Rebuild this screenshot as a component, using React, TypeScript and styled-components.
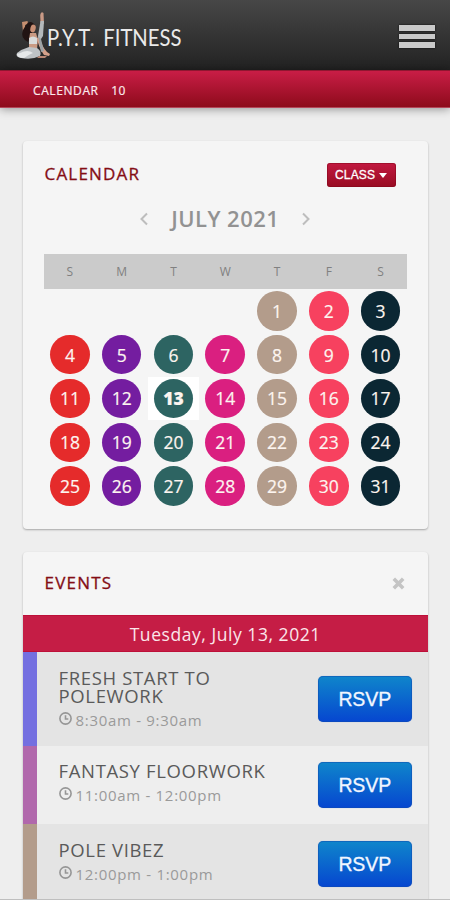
import React from 'react';
import styled, { createGlobalStyle, css } from 'styled-components';

const GlobalStyle = createGlobalStyle`
  *, *::before, *::after { box-sizing: border-box; }
  html, body { margin: 0; padding: 0; background: #eee; overflow: hidden; }
  body { font-family: "Open Sans", "Noto Sans", sans-serif; }
  button { font: inherit; border: 0; padding: 0; cursor: pointer; }
`;

const Screen = styled.div`
  display: flex;
  flex-direction: column;
  height: 900px;
  overflow: hidden;
  background: #eee;
  border-bottom: 1px solid #bfbfbf;
`;

const Header = styled.header`
  display: flex;
  flex: none;
  justify-content: space-between;
  height: 70px;
  padding: 10px 15px 0 15px;
  background: linear-gradient(#474747, #222);
`;

const Brand = styled.div`
  display: flex;
  align-items: flex-start;
`;

const Wordmark = styled.span`
  margin: 11.5px 0 0 -4px;
  font: 400 24px/30px Lato, sans-serif;
  white-space: nowrap;
  color: #eaeaea;
  transform: scaleX(0.845);
  transform-origin: left;
`;

const Initials = styled.span`
  margin-right: 3px;
  letter-spacing: 1.1px;
`;

const MenuButton = styled.button`
  display: flex;
  flex-direction: column;
  gap: 3px;
  width: 36px;
  height: 26px;
  margin-top: 15px;
  background: none;
`;

const MenuBar = styled.span`
  height: 5.6px;
  width: 36px;
  background: #c9c9c9;
  box-shadow: 0 0 2px #000;
`;

const SubNav = styled.nav`
  display: flex;
  flex: none;
  align-items: center;
  gap: 12.5px;
  height: 38px;
  padding: 2px 33px 0;
  border-top: 1px solid #8f1630;
  border-bottom: 1px solid #b5475a;
  background: linear-gradient(#c91d46, #8d0b1b);
  box-shadow: 0 1px 9px rgba(0, 0, 0, 0.4);
  font-size: 12px;
  letter-spacing: 0.6px;
  color: #fbe9ec;
  -webkit-text-stroke: 0.2px #fbe9ec;
`;

const Content = styled.main`
  display: flex;
  flex-direction: column;
  flex: none;
  gap: 22.5px;
  padding: 33px 22px 0 22.5px;
`;

const Card = styled.section`
  border-radius: 4px;
  background: #f5f5f5;
  box-shadow: 0 1px 2px rgba(0, 0, 0, 0.3);
  overflow: hidden;
`;

const CalendarCard = styled(Card)`
  height: 388px;
`;

const EventsCard = styled(Card)`
  height: 400px;
`;

const CardHeader = styled.div`
  display: flex;
  align-items: center;
  justify-content: space-between;
  height: 63.5px;
  padding: 1px 23px 2px 22px;
`;

const CalendarHeader = styled(CardHeader)`
  height: 65px;
  padding: 0 32.5px 0 22px;
`;

const Title = styled.h2`
  margin: 0;
  font-size: 17px;
  font-weight: 400;
  letter-spacing: 1.2px;
  color: #840d15;
  -webkit-text-stroke: 0.3px #840d15;
`;

const ClassButton = styled.button`
  display: flex;
  align-items: center;
  gap: 4px;
  width: 68.5px;
  height: 24.5px;
  margin-top: 3px;
  padding: 0 8px;
  border-radius: 3px;
  background: linear-gradient(#c21840, #980c22);
  box-shadow: inset 0 0 0 1px rgba(130, 5, 25, 0.5);
  font-family: "Liberation Sans", Arial, sans-serif;
  font-size: 12px;
  letter-spacing: 0.15px;
  color: #fff;
  -webkit-text-stroke: 0.3px #fff;
`;

const Caret = styled.span`
  flex: none;
  border: 4px solid transparent;
  border-top: 5px solid #fff;
  border-bottom: 0;
`;

const MonthNav = styled.div`
  display: flex;
  align-items: center;
  justify-content: center;
  gap: 23px;
  height: 26px;
`;

const MonthName = styled.span`
  margin-top: -2px;
  font-size: 22px;
  line-height: 26px;
  font-weight: 600;
  letter-spacing: 0.45px;
  color: #929292;
`;

const ChevronIcon = styled.svg`
  display: block;
  width: 8px;
  height: 14px;
  fill: none;
  stroke: #bdbdbd;
  stroke-width: 2;
`;

const Weekdays = styled.div`
  display: grid;
  grid-template-columns: repeat(7, 1fr);
  align-items: center;
  height: 35px;
  margin: 22px 21.5px 0 21.5px;
  background: #cbcbcb;
  font-size: 12px;
  text-align: center;
  color: #808080;
`;

const Days = styled.div`
  display: grid;
  grid-template-columns: repeat(7, 1fr);
  grid-auto-rows: 43.8px;
  margin: 0 21.5px 0 21.5px;
`;

const DayCell = styled.div<{ $selected?: boolean }>`
  display: flex;
  align-items: center;
  justify-content: center;
  ${(p) => p.$selected && css`background: #fff;`}
`;

const Day = styled.span<{ $color: string; $selected?: boolean }>`
  display: flex;
  align-items: center;
  justify-content: center;
  width: 39.5px;
  height: 39.5px;
  border-radius: 50%;
  background: ${(p) => p.$color};
  font-size: 17.5px;
  line-height: 24px;
  font-weight: ${(p) => (p.$selected ? 800 : 400)};
  color: #fdf5f0;
  -webkit-text-stroke: 0.2px #fdf5f0;
`;

const CloseIcon = styled.svg`
  width: 13px;
  height: 13px;
  margin-top: 1px;
  stroke: #c4c4c4;
  stroke-width: 3.6;
`;

const DateBanner = styled.div`
  display: flex;
  align-items: center;
  justify-content: center;
  height: 37px;
  border: 1px solid #bd1039;
  border-width: 1px 0;
  background: #c51d45;
  font-size: 17.5px;
  line-height: 24px;
  letter-spacing: 0.55px;
  color: #fbe6ea;
`;

const EventRow = styled.article<{ $bar: string; $shaded?: boolean; $tall?: boolean }>`
  display: flex;
  align-items: flex-start;
  justify-content: space-between;
  height: ${(p) => (p.$tall ? 93.5 : 78.8)}px;
  padding: 16.5px 16.5px 0 22px;
  border-left: 14.5px solid ${(p) => p.$bar};
  background: ${(p) => (p.$shaded ? '#e4e4e4' : '#eee')};
`;

const EventText = styled.div`
  width: 225px;
`;

const EventName = styled.h3`
  margin: 0;
  font-size: 18.5px;
  line-height: 18.7px;
  font-weight: 400;
  letter-spacing: 0.65px;
  color: #5a5a5a;
`;

const EventTime = styled.div`
  display: flex;
  align-items: center;
  gap: 4px;
  height: 20px;
  margin-top: 4px;
  font-size: 15px;
  letter-spacing: 0.7px;
  white-space: nowrap;
  color: #9a9a9a;
`;

const ClockIcon = styled.svg`
  width: 13px;
  height: 13px;
  margin-top: -2px;
  fill: none;
  stroke: #969696;
  stroke-width: 1.6;
`;

const RsvpButton = styled.button<{ $tall?: boolean }>`
  flex: none;
  width: 93.5px;
  height: 46px;
  margin-top: ${(p) => (p.$tall ? 7.5 : 0)}px;
  padding-top: 1px;
  border-radius: 5px;
  background: linear-gradient(#0f86cb, #0646d0);
  box-shadow: inset 0 0 0 1px rgba(15, 75, 175, 0.5), 0 0 1px #9aaed8;
  font-family: "Liberation Sans", Arial, sans-serif;
  font-size: 19.5px;
  letter-spacing: -0.1px;
  color: #f1f6ff;
  -webkit-text-stroke: 0.3px #f1f6ff;
`;

const WEEK_COLORS = ['#e52b2b', '#741da0', '#2d6462', '#da1f80', '#b39c8b', '#f7415f', '#0b2733'];
const FIRST_WEEKDAY = 4;
const SELECTED_DAY = 13;

type FitnessEvent = { name: string; time: string; color: string; tall?: boolean };

const EVENTS: FitnessEvent[] = [
  { name: 'FRESH START TO POLEWORK', time: '8:30am - 9:30am', color: '#746fe0', tall: true },
  { name: 'FANTASY FLOORWORK', time: '11:00am - 12:00pm', color: '#b168ac' },
  { name: 'POLE VIBEZ', time: '12:00pm - 1:00pm', color: '#b39c8b' },
];

function YogaFigure() {
  return (
    <svg width="36" height="50" viewBox="0 0 36 50">
      <path d="M7 12 L12.500 11 L13 14 L10 15 L11 23 L8 22Z" fill="#c68f70" />
      <path d="M25.500 13 L25.200 5 Q26 1 28.500 3 L29 14Z" fill="#c99a86" />
      <path d="M25.500 11 L29 11 L28 26 L24 32 L22.500 29Z" fill="#b4b9bc" />
      <path d="M11 15 Q14 10 18 13 Q22 16 18 22 L15 28 L13 32 Q5 28 8 20Z" fill="#211413" />
      <ellipse cx="18" cy="18.500" rx="2.600" ry="4" fill="#c88f75" transform="rotate(15 18 18.500)" />
      <path d="M15 23 L21 23 L23 30 L22 39 L14 39 L14 30Z" fill="#c99a83" />
      <path d="M14 28 Q18 25 22 28 L22 34 L14 34Z" fill="#d9dbdb" />
      <path d="M22 28 L25 28 Q27 37 32 42 L35 44 L34 46 L29 45 Q23 36 22 28Z" fill="#d5a18b" />
      <path d="M23 26 L26 29 L29 41 L26 42Z" fill="#9da3a6" />
      <path d="M14 37 L22 38 Q27 41 25 46 Q17 50 6 48 Q0 47 2 43 Q7 39 14 37Z" fill="#bfc3c6" />
      <path d="M5 43 Q13 39 18 43 Q13 45 9 48 Q2 48 2 44Z" fill="#e6e8e9" />
      <path d="M24 46 L32 46 L30 48 L22 48Z" fill="#b98673" />
    </svg>
  );
}

export default function App() {
  return (
    <>
      <GlobalStyle />
      <Screen>
        <Header>
          <Brand>
            <YogaFigure />
            <Wordmark>
              <Initials>P.Y.T.</Initials> FITNESS
            </Wordmark>
          </Brand>
          <MenuButton aria-label="Menu">
            <MenuBar />
            <MenuBar />
            <MenuBar />
          </MenuButton>
        </Header>
        <SubNav>
          <span>CALENDAR</span>
          <span>10</span>
        </SubNav>
        <Content>
          <CalendarCard>
            <CalendarHeader>
              <Title>CALENDAR</Title>
              <ClassButton>
                CLASS
                <Caret />
              </ClassButton>
            </CalendarHeader>
            <MonthNav>
              <ChevronIcon viewBox="0 0 8 14">
                <path d="M7 1.500 L1.500 7 L7 12.500" />
              </ChevronIcon>
              <MonthName>JULY 2021</MonthName>
              <ChevronIcon viewBox="0 0 8 14">
                <path d="M1 1.500 L6.500 7 L1 12.500" />
              </ChevronIcon>
            </MonthNav>
            <Weekdays>
              {['S', 'M', 'T', 'W', 'T', 'F', 'S'].map((label, i) => (
                <span key={i}>{label}</span>
              ))}
            </Weekdays>
            <Days>
              {Array.from({ length: 35 }, (_, i) => {
                const day = i - FIRST_WEEKDAY + 1;
                const selected = day === SELECTED_DAY;
                return (
                  <DayCell key={i} $selected={selected}>
                    {day > 0 && (
                      <Day $color={WEEK_COLORS[i % 7]} $selected={selected}>
                        {day}
                      </Day>
                    )}
                  </DayCell>
                );
              })}
            </Days>
          </CalendarCard>
          <EventsCard>
            <CardHeader>
              <Title>EVENTS</Title>
              <CloseIcon viewBox="0 0 13 13">
                <path d="M1.800 1.800 L11.200 11.200 M11.200 1.800 L1.800 11.200" />
              </CloseIcon>
            </CardHeader>
            <DateBanner>Tuesday, July 13, 2021</DateBanner>
            {EVENTS.map((event, i) => (
              <EventRow key={event.name} $bar={event.color} $shaded={i % 2 === 0} $tall={event.tall}>
                <EventText>
                  <EventName>{event.name}</EventName>
                  <EventTime>
                    <ClockIcon viewBox="0 0 13 13">
                      <circle cx="6.500" cy="6.500" r="5.600" />
                      <path d="M6.500 3.300 V7 H9.300" />
                    </ClockIcon>
                    {event.time}
                  </EventTime>
                </EventText>
                <RsvpButton $tall={event.tall}>RSVP</RsvpButton>
              </EventRow>
            ))}
          </EventsCard>
        </Content>
      </Screen>
    </>
  );
}
